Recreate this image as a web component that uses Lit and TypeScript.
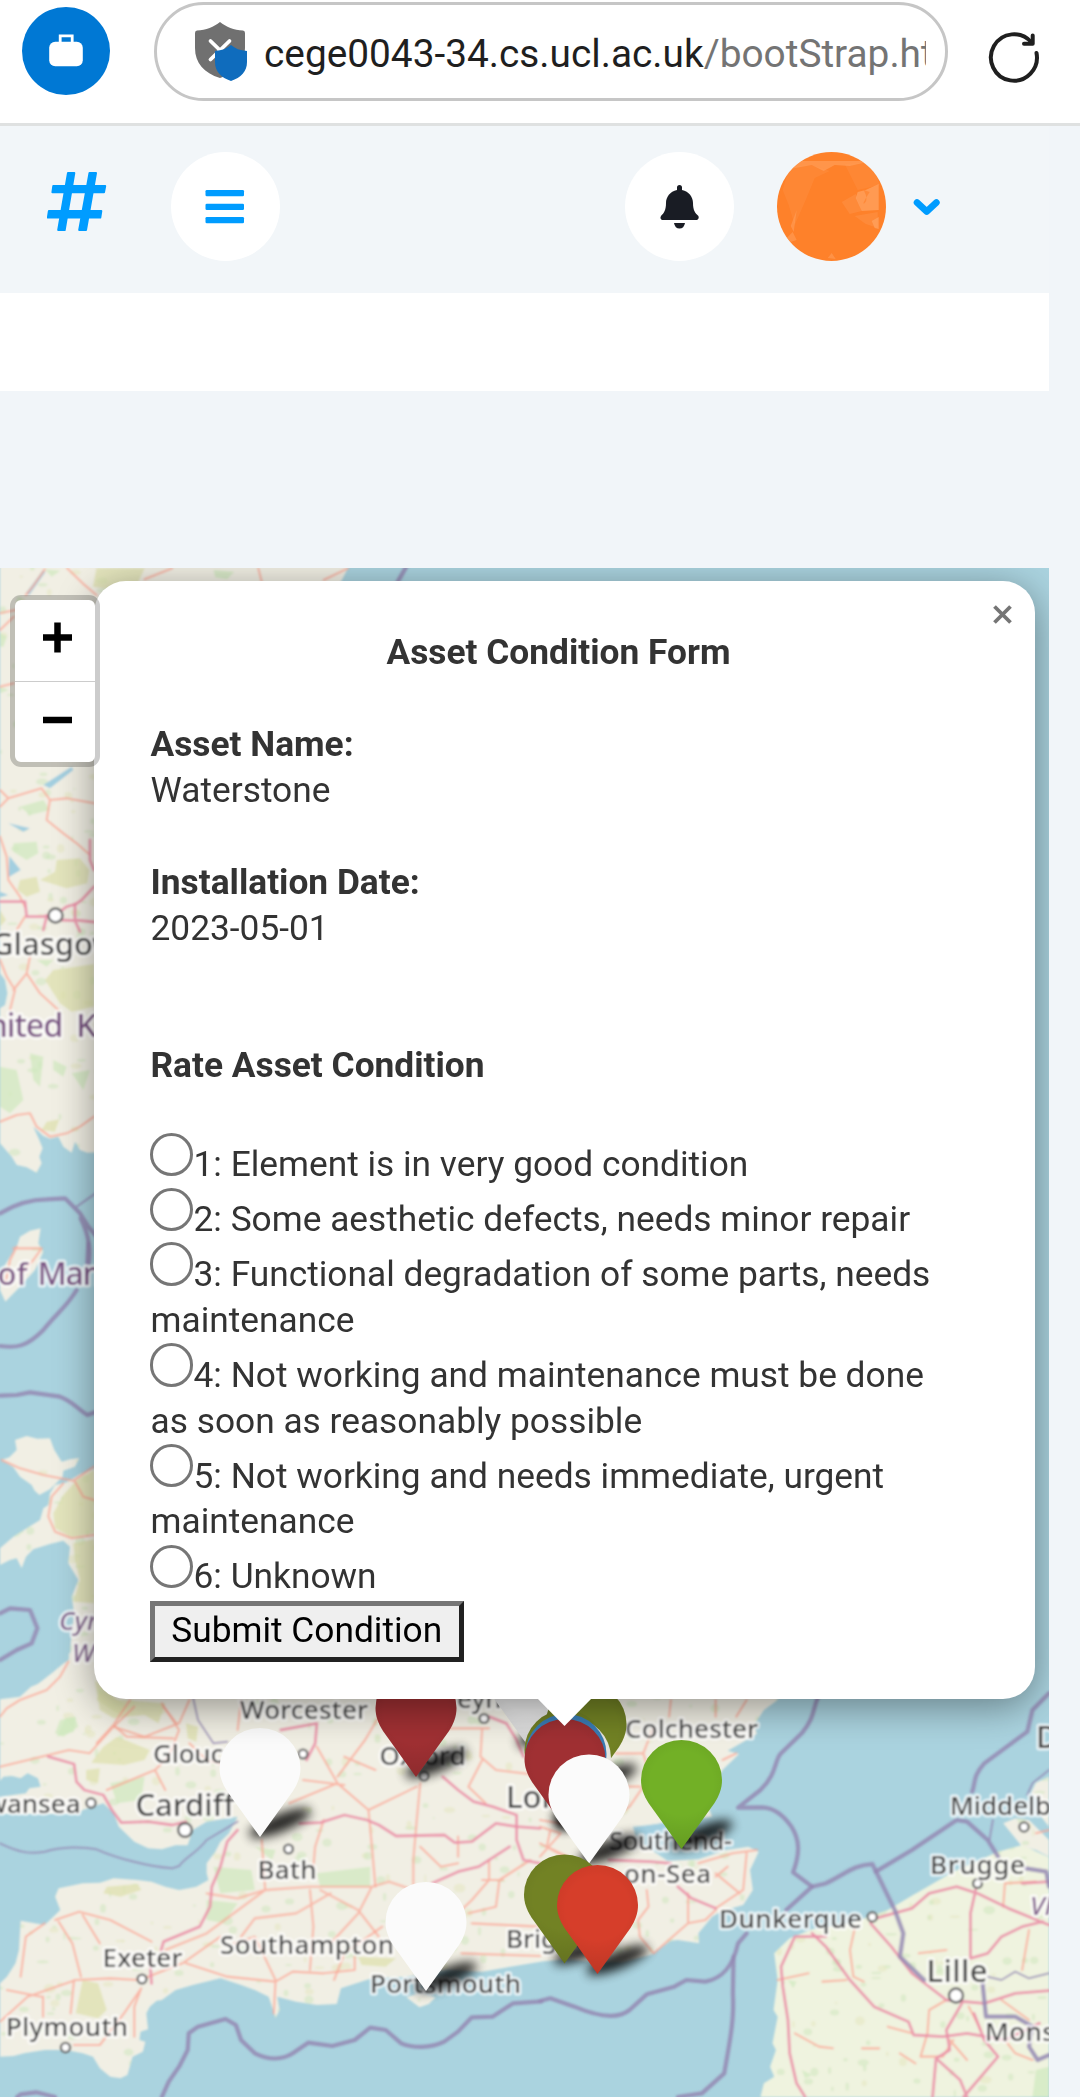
import { LitElement, html, svg, css } from "lit";
import { customElement } from "lit/decorators.js";

/* ---------- map data ---------- */

// Survey sheets: each has its own drawing scale and origin on the map.
const NORTH = "matrix(.33333 0 0 .33333 0 760)";
const WEST = "matrix(.33333 0 0 .33333 0 1250)";
const SOUTH = "matrix(.34439 0 0 .33333 0 1660)";
const EAST = "matrix(.34439 0 0 .33333 540 1660)";
const TOP = "matrix(.34439 0 0 .33333 0 540)";

interface Sheet { t: string; d: string[] }

const land: Sheet[] = [
  { t: TOP, d: ["M0 60H1020L1010 85 990 125 960 160H0Z"] },
  { t: NORTH, d: [
    "M0 -570V640L15 660 22 700 15 735 0 745V1150L35 1190 50 1215 80 1222 110 1238 125 1210 118 1190 128 1165 118 1140 100 1100 130 1128 150 1136 175 1130 190 1160 215 1178 225 1145 240 1170 262 1178 330 1175V-570Z",
    "M122 1405L90 1412 60 1430 50 1460 30 1490 0 1540V1590L16 1625 60 1580 105 1530 130 1475 115 1450Z",
  ] },
  { t: WEST, d: [
    "M5 630L28 622 50 600 45 570 80 558 112 566 150 565 163 600 185 635 210 628 238 624 225 650 190 662 188 680 150 718 118 735 104 722 95 705 60 680 40 652Z",
    "M330 640L260 665 240 672 200 697 165 705 150 730 145 765 130 775 120 810 80 835 40 860 0 895V945L30 930 50 925 65 955 78 920 100 898 150 882 190 872 210 890 205 940 235 990 215 1040 222 1090 212 1180 210 1225 180 1260 150 1280 100 1310 85 1325 60 1345 0 1355V1500H330Z",
  ] },
  { t: SOUTH, d: [
    "M0 118L58 110 90 80 110 72 150 40 185 10 200 0V-20H300V0H1570V905L1400 935 1300 930 1180 950 1080 955 990 985 978 1032 920 1035 860 1025 805 1010 812 1050 800 1074 790 1040 780 1010 740 990 700 975 640 955 560 975 510 990 470 1020 455 1022 435 1040 425 1060 430 1108 408 1115 405 1140 422 1145 415 1175 385 1190 370 1245 350 1255 320 1250 290 1225 270 1190 240 1180 190 1170 130 1170 70 1180 40 1188 0 1190V970L20 950 45 910 55 870 60 782 130 795 175 750 160 710 170 685 240 670 290 668 330 655 400 660 440 665 480 680 520 690 570 680 605 660 600 640 600 610 625 575 640 545 665 520 690 470 600 485 560 510 545 556 510 556 470 568 430 565 390 545 345 500 330 460 300 430 240 450 230 462H0V410L75 400 85 385 118 380 110 355 80 340 60 355 35 348 10 350 0 362Z",
    "M1180 1012L1215 1000 1265 1012 1245 1032 1218 1042Z",
  ] },
  { t: EAST, d: [
    "M-4 905L80 898 160 905 240 905 320 885 380 842 400 840 462 850 460 820 500 770 530 752 590 735 618 690 610 630 635 575 605 560 540 570 460 598 370 602 280 540 270 500 400 485 500 470 480 420 530 330 578 282 545 272 600 240 630 222 622 195 650 150 690 120V0H-4Z",
    "M1478 350L1440 368 1425 400 1450 420 1440 450 1478 500ZM1345 490L1380 475 1420 480 1478 540 1478 590 1440 570 1400 560Z",
  ] },
];

const france = "M640 1311L650 1270 680 1250 668 1220 685 1170 675 1150 690 1070 678 1050 690 960 680 880 725 835 790 808 900 790 1010 750 1100 695 1200 635 1330 575 1400 555 1478 592V1311Z";

const greens: Sheet[] = [
  { t: TOP, d: ["M280 85L420 85 400 130 330 150 270 140Z"] },
  { t: NORTH, d: [
    "M170 300L240 295 268 330 262 370 200 385 120 360 165 335Z",
    "M60 360L110 350 120 395 80 410 52 390Z",
    "M160 630L282 612V740L215 755 180 730 135 660Z",
    "M0 450L18 480 0 500ZM140 1085L178 1078 165 1115 125 1110Z",
  ] },
  { t: WEST, d: [
    "M282 660L230 690 190 735 160 790 165 835 215 862 282 850Z",
    "M220 880L282 868V1060L220 1055 240 990 225 930Z",
    "M300 1320L390 1370 360 1395 290 1350Z",
  ] },
  { t: SOUTH, d: [
    "M275 60L340 118 480 130 460 190 420 165 330 175 290 150Z",
    "M340 230L435 270 420 300 360 315 265 308 300 260Z",
    "M240 960L285 970 310 1050 285 1075 220 1060Z",
    "M310 680L400 672 410 690 350 710 300 700ZM540 190L575 200 570 245 545 235ZM1040 890L1150 895 1120 920 1050 915Z",
    "M250 330L290 325 285 368 250 360Z",
  ] },
];

const forests: Sheet[] = [
  { t: NORTH, d: [
    "M40 250L110 245 115 280 80 300 40 275Z", "M60 140L130 120 150 150 90 165Z",
    "M0 920L50 930 70 1020 30 1060 0 1040Z", "M90 880L130 890 120 980 100 960Z",
    "M160 900L200 920 190 950 160 930ZM215 940L270 930 250 990ZM110 600L160 600 140 620Z",
  ] },
  { t: WEST, d: ["M180 1410L225 1400 235 1430 190 1460 165 1450Z"] },
  { t: SOUTH, d: [
    "M620 620L730 630 740 690 640 700ZM600 720L690 730 650 790 600 780Z",
    "M920 640L1075 620 1075 680 930 680ZM190 175L220 170 215 215 165 230Z",
    "M320 370L420 350 410 420 340 430ZM740 560L800 570 790 600Z",
  ] },
  { t: EAST, d: ["M1440 1230L1478 1220V1311H1430ZM720 960L745 965 735 985ZM760 1230L790 1245 770 1255Z"] },
  { t: TOP, d: ["M620 90L680 95 660 118 625 112ZM130 88L175 92 150 110Z", "M0 280L20 290 10 320 0 320ZM0 440L25 450 0 460Z"] },
];

const lochs: Sheet[] = [
  { t: NORTH, d: ["M28 288L62 330 25 352ZM0 395L25 405 0 412ZM130 75L215 20 220 30 150 85ZM25 190L90 205 70 215Z"] },
  { t: TOP, d: ["M75 160L125 90 132 96 85 165Z"] },
  { t: EAST, d: ["M270 505L400 480 470 470 460 540 330 540Z"] },
];

const trunkRoads: Sheet[] = [
  { t: NORTH, d: ["M282 380L245 420 228 432 200 440 180 455 130 470 80 470 75 425 0 425", "M225 432L225 480 282 486M180 480L225 482 240 515M270 240L270 300 282 330M140 470L130 510"] },
  { t: SOUTH, d: [
    "M140 290L215 312 222 365 245 390 300 405 325 450 352 488 430 485 500 495 540 485M690 510L660 545 640 620 615 680 610 740 580 800 475 845 468 870M435 895L440 970",
    "M815 210L920 190 915 250 890 300M870 490L930 488 1000 465 1065 480 1100 495 1150 528 1290 525 1320 548 1370 545 1440 490 1500 500 1568 505",
    "M1285 350L1330 390 1375 425 1430 440 1500 465 1500 540 1520 600 1568 610M1255 670L1330 635 1390 620 1480 560",
    "M1420 170L1470 190 1500 240 1520 290",
  ] },
  { t: EAST, d: [
    "M400 680L440 715 510 745M640 1311",
    "M1478 665L1400 670M975 775L1080 745 1130 700 1210 680 1270 700 1360 745 1478 795M1265 690L1250 760 1250 895 1300 880 1340 830 1400 800 1460 785",
    "M790 820L830 860 900 960 970 1040 1070 1085 1085 1125 1170 1130 1240 1120 1350 1140 1450 1090M960 790L1020 860 1080 940 1180 1020 1290 1030 1380 1000 1478 992",
    "M830 830L740 830 700 920 705 980 720 1080 725 1180 745 1270 770 1311M1225 1030L1180 1110 1190 1170 1150 1195 1140 1311M1150 1195L1220 1260 1240 1311M1230 1311L1330 1190 1290 1140 1260 1060",
    "M200 600L320 605 380 610",
  ] },
];

const roads: Sheet[] = [
  { t: TOP, d: ["M195 85L240 130 280 165M130 88L95 140 75 165M500 85L420 118M750 85L760 125M1010 85L940 120M0 220L45 210M0 270L40 230M0 440L40 430"] },
  { t: NORTH, d: [
    "M0 90L25 115 75 100 125 85 150 120 200 115 282 130M0 140L25 115M150 120L140 180 190 220 230 250 270 285",
    "M0 230L20 290 25 360 60 410 75 440M75 470L50 510M0 600L20 650 45 690 30 750M90 590L80 640 40 690M80 640L120 700 175 750",
    "M0 1085L50 1065 90 1060 110 1100 150 1130 200 1120 240 1100 282 1070",
    "M50 1460L30 1500 16 1570M40 1465L125 1465 100 1500 60 1545",
  ] },
  { t: WEST, d: [
    "M5 630L60 655 130 675 220 692 282 650M190 700L155 740 145 800 165 845 215 865 282 855M225 695L250 740 282 750",
    "M205 1235L180 1280 140 1320 60 1350 20 1375 0 1400M390 1350L340 1425 290 1480M340 1425L380 1460 520 1465M490 1370L530 1420",
  ] },
  { t: SOUTH, d: [
    "M0 320L120 290 200 270 260 280 330 200 390 140M330 200L420 230 520 190 550 120M470 130L520 210 490 290 450 330 310 390M450 330L480 390",
    "M550 250L600 300 690 330M700 120L690 210M920 260L980 370 1070 450 1170 400 1210 380M1070 450L1080 560 1090 680M980 370L840 430M1000 290L1090 330M880 360L1000 375M1100 170L1060 240 980 350",
    "M1220 370L1210 480 1200 600 1200 690M1220 560L1280 620 1330 610M1330 530L1330 590M1270 205L1420 205M1400 205L1395 290 1440 330 1560 345M1400 300L1360 380 1410 430M1420 600L1420 660 1370 720 1330 760M1540 600L1450 660 1440 740 1360 760M1400 660L1460 660",
    "M480 870L600 820 770 690 900 680 1080 680 1130 665 1200 690M600 700L690 715 770 690 760 540M900 690L910 800 900 930M700 830L740 775 860 760 960 700M1080 680L1040 760 960 850M930 690L1040 750 1100 830M680 850L740 830 800 960M940 480L915 560 910 620",
    "M160 780L230 755 320 780 440 845M170 785L210 850 235 950M240 765L290 850M60 950L75 830 130 790M0 1085L80 1010 220 960 320 955 400 960 430 950 530 910 640 830M540 910L660 950 800 965 850 935 940 940 1030 930 1030 890M800 965L795 1060M410 985L390 1040 390 1130M410 985L360 1060 290 1155 215 1155M20 990L120 1010M125 1010L125 1070M215 960L205 1060",
    "M1340 880L1568 888M1370 790L1568 800M970 960L1000 880 1110 800",
  ] },
  { t: EAST, d: [
    "M0 500L60 520 0 590M30 510L20 560 80 590M0 550L90 600M0 480L120 500M220 280L300 280 320 350 260 440 210 470M300 280L330 200M350 290L400 310M380 120L375 170M510 120L510 170M570 170L600 120M530 300L570 280",
    "M220 380L290 380M460 610L560 580 630 570M600 580L590 690 510 745M510 640L580 700M310 690L315 740 285 780 290 830 330 880M430 700L430 790 330 880M430 790L480 780 510 750M545 620L510 650",
    "M915 800L900 870 910 950 940 965M690 960L780 940M820 965L890 960M740 1120L810 1160 850 1165M935 1165L985 1165M1010 1100L1080 1120M1130 1311",
    "M1345 740L1350 670 1440 665M1420 810L1400 930M1180 1020L1130 1050 1125 1120 1105 1190 1170 1190 1200 1140M1245 1040L1280 1110M1340 1020L1420 1080M1350 1140L1380 1180 1430 1200M1045 1180L1090 1210M1190 1140L1240 1200M1440 520L1478 510M1100 880L1180 870",
  ] },
];

const borders: Sheet[] = [
  { t: TOP, d: ["M1180 80L1155 125"] },
  { t: NORTH, d: ["M0 1360C50 1330 90 1318 140 1318L195 1315 240 1360 265 1400 290 1430M242 1375C270 1430 272 1480 266 1510"] },
  { t: WEST, d: [
    "M265 -20L262 40M230 120C200 170 170 190 130 240C80 290 50 295 0 288",
    "M0 437L50 435 90 427 180 440C220 455 230 475 262 495L290 485",
    "M0 1090L30 1075 90 1080 112 1135 95 1180 50 1200 0 1230",
  ] },
  { t: SOUTH, d: ["M50 1311L60 1303 105 1297 160 1311M470 1311L490 1265 520 1220 545 1170 548 1120 575 1100 655 1077 685 1095 700 1140 740 1180C780 1200 820 1200 850 1180L895 1148 965 1158 1030 1140 1075 1103 1120 1110 1165 1150C1200 1165 1250 1165 1290 1145L1330 1115 1370 1072 1430 1070 1490 1030 1572 1024"] },
  { t: EAST, d: [
    "M0 1023L30 1015 100 1040C180 1075 230 1075 260 1050L310 1003 390 980 425 960 480 965C530 955 560 920 575 850L600 820M715 750L790 680 735 637C755 580 755 540 730 500C700 455 670 443 645 442L575 443 640 390C690 340 680 300 700 280L760 220C800 170 790 150 808 110",
    "M790 680L830 670C890 640 910 615 965 612L1030 750 1055 820 1045 890 1115 960",
    "M975 635L1080 570 1210 480 1240 485 1300 540 1330 590M1255 395C1265 370 1255 350 1290 310L1415 215 1430 150 1478 100",
    "M562 890L560 1000C565 1080 550 1150 535 1240L470 1300 400 1311",
    "M1285 970L1295 1070 1380 1070 1430 1100 1420 1160 1445 1200 1478 1185M1410 625L1470 635 1478 680",
  ] },
];

const thinBorders: Sheet[] = [
  { t: NORTH, d: ["M230 1340L290 1298"] },
  { t: SOUTH, d: ["M0 550C60 580 90 582 130 575C180 560 240 560 280 568C340 595 430 620 500 625L520 618C540 590 570 580 600 540L690 485", "M560 110L575 180 620 250 660 245"] },
  { t: EAST, d: ["M1300 950L1340 960 1380 935 1420 955 1478 940M1315 480L1305 540M1478 330L1430 370 1415 405"] },
];

// x, y, radius
const towns: number[][] = [
  [55.5, 915.5, 7], [91, 1803, 4.6], [185, 1830, 6.8], [288.5, 1849, 4.4], [424, 1776, 4.4],
  [484, 1718.5, 4.4], [303, 1754, 4.4], [142, 1979, 4.4], [65.5, 2047.5, 4.6],
  [1024, 1827, 4.6], [977.5, 1883.5, 4.4], [872.3, 1917, 4.6], [956, 1995.5, 7],
];

interface Label { s: string; x: number; y: number; w?: number; f?: number; c?: string; end?: boolean }
const labels: Label[] = [
  { s: "Glasgow", x: -9, y: 955, f: 31 },
  { s: "United", x: 63.5, y: 1036.5, w: 99, f: 32.5, c: "country", end: true },
  { s: "Kingdom", x: 76, y: 1036.5, f: 33, c: "country" },
  { s: "Isle of", x: 27.5, y: 1285, f: 31, c: "country", end: true },
  { s: "Man", x: 37.5, y: 1285, f: 32, w: 65, c: "country" },
  { s: "Cymru /", x: 59, y: 1630, f: 26, c: "region" },
  { s: "Wales", x: 72, y: 1661.5, f: 26, c: "region" },
  { s: "Worcester", x: 240, y: 1719, w: 128 },
  { s: "Gloucester", x: 153, y: 1763, w: 133 },
  { s: "Swansea", x: 80.5, y: 1812.5, end: true },
  { s: "Cardiff", x: 135.5, y: 1816, w: 99, f: 31 },
  { s: "Bath", x: 257.5, y: 1879, w: 59 },
  { s: "Oxford", x: 379.5, y: 1764.5, w: 86 },
  { s: "eynes", x: 457, y: 1707.5 },
  { s: "London", x: 506, y: 1808, f: 31 },
  { s: "Southampton", x: 220, y: 1954, w: 174 },
  { s: "Portsmouth", x: 370, y: 1992.5, w: 151 },
  { s: "Plymouth", x: 6, y: 2036, w: 122 },
  { s: "Exeter", x: 102.5, y: 1966.5, w: 80 },
  { s: "Brighton", x: 506, y: 1948 },
  { s: "Colchester", x: 625, y: 1737.5, w: 133 },
  { s: "Southend-", x: 609, y: 1849.5, w: 123 },
  { s: "on-Sea", x: 624, y: 1883, w: 87 },
  { s: "Dunkerque", x: 719, y: 1928, w: 143 },
  { s: "Middelburg", x: 950, y: 1815 },
  { s: "Brugge", x: 930, y: 1873.5, w: 95 },
  { s: "Den Haag", x: 1036, y: 1748, f: 31 },
  { s: "Lille", x: 926.5, y: 1982, w: 61, f: 31 },
  { s: "Mons", x: 985, y: 2041, w: 70 },
  { s: "Vlaanderen", x: 1030, y: 1915, c: "region" },
];

const pins: { x: number; y: number; fill: string }[] = [
  { x: 528, y: 1746, fill: "#e9e9e9" },
  { x: 416, y: 1777, fill: "#a03033" },
  { x: 586, y: 1793, fill: "#728224" },
  { x: 565, y: 1819, fill: "#728224" },
  { x: 570.5, y: 1827, fill: "#ecebe4" },
  { x: 566, y: 1823, fill: "#3b7fb8" },
  { x: 565, y: 1828, fill: "#a03033" },
  { x: 260, y: 1837, fill: "#fbfbfb" },
  { x: 681.5, y: 1849, fill: "#72b026" },
  { x: 589, y: 1863.5, fill: "#fbfbfb" },
  { x: 564.5, y: 1963.5, fill: "#728224" },
  { x: 597.5, y: 1974, fill: "#d63e2a" },
  { x: 426, y: 1991, fill: "#fbfbfb" },
];

// Scattered woodland flecks, repeatable between renders.
function flecks(count: number) {
  let s = 7;
  const r = () => (s = (s * 16807) % 2147483647) / 2147483647;
  const out = [];
  for (let i = 0; i < count; i++) {
    const west = i % 4 === 0;
    const x = west ? r() * 110 : r() * 1049;
    const y = west ? 568 + r() * 1100 : 1690 + r() * 407;
    out.push(svg`<ellipse class=${i % 3 ? "fleck" : "fleck warm"} cx=${x.toFixed(1)} cy=${y.toFixed(1)} rx=${(1 + r() * 5).toFixed(1)} ry=${(1 + r() * 3.5).toFixed(1)}/>`);
  }
  return out;
}

const draw = (sheets: Sheet[], cls: string) =>
  sheets.map((g) => svg`<g transform=${g.t}>${g.d.map((d) => svg`<path class=${cls} d=${d}/>`)}</g>`);

@customElement("asset-map")
export class AssetMap extends LitElement {
  static styles = css`
    :host { display: block; }
    svg { display: block; width: 1049px; height: 1529px; }
    .land { fill: #f1efe4; }
    .plain { fill: #eff3df; }
    .heath { fill: #dde0ab; opacity: .7; }
    .wood { fill: #cfe8bd; opacity: .7; }
    .water { fill: #a3cfe0; }
    .fleck { fill: #cde6bb; opacity: .5; }
    .warm { fill: #e3e6bd; }
    .trunk, .road, .border, .thin { fill: none; stroke-linejoin: round; stroke-linecap: round; vector-effect: non-scaling-stroke; }
    .trunk { stroke: #ea8ca6; stroke-width: 2.8; opacity: .85; }
    .road { stroke: #fba593; stroke-width: 2.1; opacity: .75; }
    .border { stroke: #9489b3; stroke-width: 4.2; opacity: .85; }
    .thin { stroke: #9489b3; stroke-width: 2; opacity: .75; }
    .town { fill: #fff; stroke: #666; stroke-width: 2.4; }
    .label { font-family: "Noto Sans", sans-serif; font-weight: 500; fill: #404040; stroke: rgba(255, 255, 255, .75); stroke-width: 5px; stroke-linejoin: round; paint-order: stroke; }
    .country { fill: #7b5484; }
    .region { fill: #84648f; font-style: italic; }
    .shade { fill: #000; opacity: .85; }
  `;

  render() {
    return html`<svg viewBox="0 568 1049 1529">
      <defs>
        <filter id="soft" x="0" y="568" width="1049" height="1529" filterUnits="userSpaceOnUse"><feGaussianBlur stdDeviation=".9"/></filter>
        <filter id="cast" x="-50%" y="-150%" width="200%" height="400%"><feGaussianBlur stdDeviation="5.5"/></filter>
        <radialGradient id="rim" gradientUnits="userSpaceOnUse" cx="0" cy="-66" r="70">
          <stop offset=".45" stop-color="#000" stop-opacity="0"/><stop offset="1" stop-color="#000" stop-opacity=".13"/>
        </radialGradient>
        <clipPath id="coast">${land.flatMap((g) => g.d.map((d) => svg`<path transform=${g.t} d=${d}/>`))}<path transform=${EAST} d=${france}/></clipPath>
      </defs>
      <rect y="568" width="1049" height="1529" fill="#aad3df"/>
      <g filter="url(#soft)">
        ${draw(land, "land")}
        <path class="plain" transform=${EAST} d=${france}/>
        <g clip-path="url(#coast)">${flecks(900)}</g>
        ${draw(greens, "heath")}${draw(forests, "wood")}${draw(lochs, "water")}
        ${draw(roads, "road")}${draw(trunkRoads, "trunk")}
        ${draw(thinBorders, "thin")}${draw(borders, "border")}
        ${towns.map(([x, y, r]) => svg`<circle class="town" cx=${x} cy=${y} r=${r}/>`)}
        ${labels.map((l) => l.w
          ? svg`<text class="label ${l.c ?? ""}" x=${l.x} y=${l.y} font-size=${l.f ?? 26} textLength=${l.w} text-anchor=${l.end ? "end" : "start"}>${l.s}</text>`
          : svg`<text class="label ${l.c ?? ""}" x=${l.x} y=${l.y} font-size=${l.f ?? 26} text-anchor=${l.end ? "end" : "start"}>${l.s}</text>`)}
      </g>
      ${pins.map((p) => svg`<ellipse class="shade" filter="url(#cast)" transform="translate(${p.x + 20} ${p.y - 14}) rotate(-22)" rx="33" ry="9"/>`)}
      ${pins.map((p) => svg`<g transform="translate(${p.x} ${p.y})">
        <path fill=${p.fill} d="M0 0L-33 -46C-38 -54 -40.5 -61 -40.5 -69A40.5 40 0 0 1 40.5 -69C40.5 -61 38 -54 33 -46Z"/>
        ${p.fill === "#fbfbfb" ? "" : svg`<path fill="url(#rim)" d="M0 0L-33 -46C-38 -54 -40.5 -61 -40.5 -69A40.5 40 0 0 1 40.5 -69C40.5 -61 38 -54 33 -46Z"/>`}
      </g>`)}
    </svg>`;
  }
}

const choices = [
  "1: Element is in very good condition",
  "2: Some aesthetic defects, needs minor repair",
  "3: Functional degradation of some parts, needs maintenance",
  "4: Not working and maintenance must be done as soon as reasonably possible",
  "5: Not working and needs immediate, urgent maintenance",
  "6: Unknown",
];

@customElement("condition-form")
export class ConditionForm extends LitElement {
  static styles = css`
    :host { display: block; box-sizing: border-box; padding: 49px 68.5px 37px 56.5px; font: 35.3px/45.9px Roboto, sans-serif; color: #333; }
    .title { text-align: center; font-weight: 700; margin-bottom: 46px; }
    .field { margin-bottom: 46px; }
    .name { font-weight: 700; }
    .heading { font-weight: 700; margin: 91.5px 0 44.5px; }
    .choice { display: block; }
    .radio { display: inline-block; box-sizing: border-box; width: 43.5px; height: 43.5px; margin: -.6px .5px 0 -1px; border: 3px solid #767676; border-radius: 50%; }
    .submit { display: block; box-sizing: border-box; width: 313.5px; height: 61px; margin: .5px 0 0 -.5px; padding: 0 0 2px; border: 5px solid; border-color: #767676 #212121 #212121 #767676; background: #efefef; color: #000; font: 35.3px/46px Roboto, sans-serif; border-radius: 0; }
  `;

  render() {
    return html`
      <div class="title">Asset Condition Form</div>
      <div class="field"><div class="name">Asset Name:</div><div>Waterstone</div></div>
      <div class="field"><div class="name">Installation Date:</div><div>2023-05-01</div></div>
      <div class="heading">Rate Asset Condition</div>
      ${choices.map((c) => html`<label class="choice"><span class="radio"></span>${c}</label>`)}
      <button class="submit">Submit Condition</button>
    `;
  }
}

@customElement("app-root")
export class AppRoot extends LitElement {
  static styles = css`
    :host { display: block; width: 1080px; height: 2097px; overflow: hidden; background: #f1f5f9; font-family: Roboto, sans-serif; }
    .browser { box-sizing: border-box; height: 126px; display: flex; align-items: flex-start; background: #fff; border-bottom: 3px solid #dfe1e1; padding: 2px 36px 0 22px; }
    .profile { width: 88px; height: 88px; margin: 5px 44px 0 0; flex: none; }
    .url { box-sizing: border-box; width: 794px; height: 99px; flex: none; border: 3px solid #c6c6c6; border-radius: 50px; display: flex; align-items: center; padding-left: 38px; }
    .shield { width: 54px; height: 60px; flex: none; margin-right: 15px; }
    .address { width: 662px; margin-top: 5px; overflow: hidden; white-space: nowrap; font-size: 38.8px; line-height: 60px; color: #1f1f1f; }
    .path { color: #747474; }
    .reload { width: 60px; height: 60px; margin: 25px 0 0 36px; flex: none; }
    .nav { box-sizing: border-box; width: 1049px; height: 167px; padding: 26px 107.7px 0 47px; display: flex; align-items: flex-start; background: #f2f6f9; }
    .hash { width: 60px; height: 60px; margin: 19px 64px 0 0; }
    .round { width: 109px; height: 109px; }
    .bell { margin-left: auto; margin-right: 43px; }
    .chevron { width: 28px; height: 20px; margin: 45px 0 0 27px; }
    .band { width: 1049px; height: 98px; background: #fff; }
    .stage { position: relative; width: 1049px; height: 1529px; margin-top: 177px; overflow: hidden; }
    .popup { position: absolute; left: 94px; top: 13px; width: 941px; height: 1118px; background: #fff; border-radius: 32px; box-shadow: 0 8px 38px rgba(0, 0, 0, .4); }
    .tip { position: absolute; left: 443px; bottom: -27px; width: 55px; height: 28px; background: #fff; clip-path: polygon(0 0, 100% 0, 50% 100%); }
    .close { position: absolute; right: 22.5px; top: 23px; width: 21px; height: 21px; }
    .zoom { position: absolute; left: 10px; top: 27px; width: 80px; border: 5px solid rgba(0, 0, 0, .2); border-radius: 11px; background-clip: padding-box; background-color: #fff; display: flex; flex-direction: column; }
    .key { height: 81px; display: block; }
    .key + .key { border-top: 1.5px solid #ccc; height: 80px; }
  `;

  render() {
    return html`
      <header class="browser">
        <svg class="profile" viewBox="22 7 88 88">
          <circle cx="66" cy="51" r="44" fill="#0078d4"/>
          <path d="M60.2 43V35.8H72.2V43" fill="none" stroke="#fff" stroke-width="2.8"/>
          <rect x="49.2" y="41.8" width="33.6" height="24.4" rx="6" fill="#fff"/>
        </svg>
        <div class="url">
          <svg class="shield" viewBox="195 23 54 60">
            <path d="M220 23C226 28 234 31 243 31.5Q245 31.7 245 34V49C245 64 236 74 220 79C204 74 195 64 195 49V34Q195 31.7 197 31.5C206 31 214 28 220 23Z" fill="#707070"/>
            <path d="M210.5 42L229.5 60.5M229.5 42L210.5 60.5" stroke="#fff" stroke-width="3.8" stroke-linecap="round"/>
            <path d="M231 46C235 49.5 240 51.5 247 52V63C247 72.5 241 78.5 231 82C221 78.5 215 72.5 215 63V52C222 51.5 227 49.5 231 46Z" fill="#0f6cbd"/>
          </svg>
          <div class="address">cege0043-34.cs.ucl.ac.uk<span class="path">/bootStrap.html</span></div>
        </div>
        <svg class="reload" viewBox="984 27 60 60" fill="none" stroke="#1f1f1f" stroke-width="4" stroke-linecap="round" stroke-linejoin="round">
          <path d="M1036.5 53A23 23.2 0 1 1 1031.5 42.500"/>
          <path d="M1032.7 35.5V43.8H1024"/>
        </svg>
      </header>

      <nav class="nav">
        <svg class="hash" viewBox="47 171 60 60" fill="#009cff">
          <g stroke="#009cff" stroke-width="2" stroke-linejoin="round">
            <path d="M68 173H74.3L64.7 230H58.2Z"/><path d="M89.5 173H96L86 230H79.2Z"/>
            <path d="M53.3 186H105.2L104 192.3H52.4Z"/><path d="M48.9 211H101.3L100.3 217.6H47.9Z"/>
          </g>
        </svg>
        <svg class="round" viewBox="171.5 152 109 109">
          <circle cx="226" cy="206.5" r="54.5" fill="#fff"/>
          <g fill="#009cff"><rect x="206" y="190" width="38.5" height="6.2" rx="1.3"/><rect x="206" y="203.8" width="38.5" height="6.2" rx="1.3"/><rect x="206" y="217" width="38.5" height="6.2" rx="1.3"/></g>
        </svg>
        <svg class="round bell" viewBox="625 152 109 109">
          <circle cx="679.5" cy="206.5" r="54.5" fill="#fff"/>
          <path fill="#191c24" d="M677 190V187.5Q677 185 679.5 185T682 187.5V190C689 191.5 693 197 693 203C693 210 695 213 698.4 216Q699.5 218.5 697 220H662Q659.5 218.5 661 216C664 213 666 210 666 203C666 197 670 191.5 677 190ZM674 223H685Q684 228.5 679.5 228.5T674 223Z"/>
        </svg>
        <svg class="round" viewBox="777.3 152 109 109">
          <defs><clipPath id="face"><circle cx="831.8" cy="206.5" r="54.5"/></clipPath></defs>
          <circle cx="831.8" cy="206.5" r="54.5" fill="#fe812a"/>
          <g clip-path="url(#face)" fill="#ffa05c">
            <path opacity=".65" d="M797 161H872L850 166 835 165 824 171 812 165 790 169Z"/>
            <path opacity=".22" d="M790 166L812 165 830 171 815 178 806 200 795 225 789 205 783 190Z"/>
            <path opacity=".22" d="M845 164L872 162 880 185 858 190Z"/>
            <path opacity=".8" d="M858 192L866 190 879 184V210L862 211 856 198Z"/>
            <path opacity=".3" d="M842 202L856 194 862 211 850 214ZM855 216L878 212V228L866 224Z"/>
            <path opacity=".8" d="M872 221L879 217V229L875 228Z"/>
            <path opacity=".55" d="M787 238L793 232 797 240 791 242ZM797 210L791 226 794 232ZM828 258L832 253 836 259Z"/>
          </g>
          <path d="M864 190Q869 200 865 203T870 192" fill="#fe812a" opacity=".6"/>
        </svg>
        <svg class="chevron" viewBox="913 197 28 20"><path d="M917 202.5L926.7 211.5 936.4 202.5" fill="none" stroke="#009cff" stroke-width="6.6" stroke-linecap="round" stroke-linejoin="round"/></svg>
      </nav>

      <div class="band"></div>

      <main class="stage">
        <asset-map></asset-map>
        <section class="popup">
          <condition-form></condition-form>
          <span class="tip"></span>
          <svg class="close" viewBox="0 0 21 21"><path d="M2.5 2.5L18.5 18.5M18.5 2.5L2.5 18.5" stroke="#757575" stroke-width="3.8"/></svg>
        </section>
        <div class="zoom">
          <svg class="key" viewBox="0 0 80 81"><path d="M28 37.5H57M42.5 22.5V52.5" stroke="#000" stroke-width="6.5"/></svg>
          <svg class="key" viewBox="0 0 80 80"><path d="M28 38H57" stroke="#000" stroke-width="6.5"/></svg>
        </div>
      </main>
    `;
  }
}
